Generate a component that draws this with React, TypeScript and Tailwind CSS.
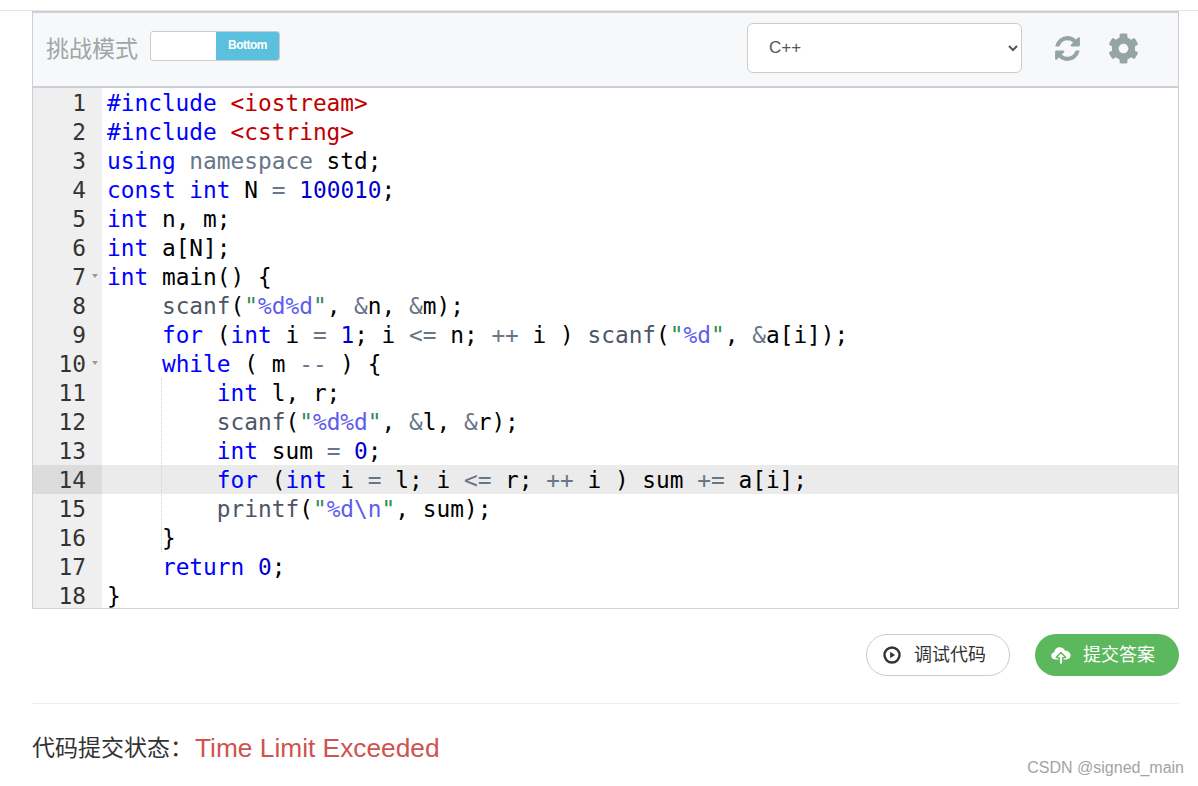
import { FaCog } from 'react-icons/fa';

type Token = [string, string?];

const kw = 'text-[#0000ff]';
const inc = 'text-[#c00000]';
const op = 'text-[#687687]';
const fn = 'text-[#4d5666]';
const num = 'text-[#0000cd]';
const q = 'text-[#2e8b57]';
const fmt = 'text-[#5c5cf0]';

const lines: { tokens: Token[]; fold?: boolean }[] = [
  { tokens: [['#include', kw], [' '], ['<iostream>', inc]] },
  { tokens: [['#include', kw], [' '], ['<cstring>', inc]] },
  { tokens: [['using', kw], [' '], ['namespace', op], [' std;']] },
  { tokens: [['const', kw], [' '], ['int', kw], [' N '], ['=', op], [' '], ['100010', num], [';']] },
  { tokens: [['int', kw], [' n, m;']] },
  { tokens: [['int', kw], [' a[N];']] },
  { tokens: [['int', kw], [' main() {']], fold: true },
  { tokens: [['    '], ['scanf', fn], ['('], ['"', q], ['%d%d', fmt], ['"', q], [', '], ['&', op], ['n, '], ['&', op], ['m);']] },
  {
    tokens: [
      ['    '], ['for', kw], [' ('], ['int', kw], [' i '], ['=', op], [' '], ['1', num], ['; i '], ['<=', op], [' n; '], ['++', op],
      [' i ) '], ['scanf', fn], ['('], ['"', q], ['%d', fmt], ['"', q], [', '], ['&', op], ['a[i]);'],
    ],
  },
  { tokens: [['    '], ['while', kw], [' ( m '], ['--', op], [' ) {']], fold: true },
  { tokens: [['        '], ['int', kw], [' l, r;']] },
  { tokens: [['        '], ['scanf', fn], ['('], ['"', q], ['%d%d', fmt], ['"', q], [', '], ['&', op], ['l, '], ['&', op], ['r);']] },
  { tokens: [['        '], ['int', kw], [' sum '], ['=', op], [' '], ['0', num], [';']] },
  {
    tokens: [
      ['        '], ['for', kw], [' ('], ['int', kw], [' i '], ['=', op], [' l; i '], ['<=', op], [' r; '], ['++', op],
      [' i ) sum '], ['+=', op], [' a[i];'],
    ],
  },
  { tokens: [['        '], ['printf', fn], ['('], ['"', q], ['%d\\n', fmt], ['"', q], [', sum);']] },
  { tokens: [['    }']] },
  { tokens: [['    '], ['return', kw], [' '], ['0', num], [';']] },
  { tokens: [['}']] },
];

const App = () => {
  return (
    <div className="relative h-[786px] w-[1198px] overflow-hidden bg-white font-['Liberation_Sans','Noto_Sans_CJK_SC',sans-serif]">
      <div className="h-[11px] border-b border-[#e4e5e7]"></div>

      <div className="pl-8 pr-[19px]">
        {/* Editor */}
        <div className="border border-t-2 border-[#ccd0d6] border-b-[#d2d2d2]">
          <div className="flex h-[75px] items-center border-b-2 border-[#ccd0d6] bg-[#f7f8fa] pl-[13px]">
            <span className="text-[23px] leading-none text-[#a0a5a5]">挑战模式</span>
            <div className="ml-[12px] mt-[-8px] flex h-[30px] w-[130px] overflow-hidden rounded-[3px] border border-[#cccccc] bg-white">
              <div className="w-[65px]"></div>
              <div className="flex flex-1 items-center justify-center bg-[#5bc0de] pb-[2px] text-xs font-bold tracking-[-0.5px] text-white">
                Bottom
              </div>
            </div>
            <select className="ml-[467px] mt-[-4px] h-[50px] w-[275px] rounded-md border border-[#cccccc] bg-white pl-[17px] text-[17px] text-[#555555]">
              <option>C++</option>
            </select>
            <svg viewBox="0 0 1792 1792" className="ml-[31px] mt-[-2px] h-[29px] w-[29px] fill-[#95a5a6]">
              <path d="M1639 1056q0 5-1 7-64 268-268 434.5t-478 166.5q-146 0-282.5-55t-243.5-157l-129 129q-19 19-45 19t-45-19-19-45v-448q0-26 19-45t45-19h448q26 0 45 19t19 45-19 45l-137 137q71 66 161 102t187 36q134 0 250-65t186-179q11-17 53-117 8-23 30-23h192q13 0 22.5 9.5t9.5 22.5zm25-800v448q0 26-19 45t-45 19h-448q-26 0-45-19t-19-45 19-45l138-138q-148-137-349-137-134 0-250 65t-186 179q-11 17-53 117-8 23-30 23h-199q-13 0-22.5-9.5t-9.5-22.5v-7q65-268 270-434.5t480-166.5q146 0 284 55.5t245 156.5l130-129q19-19 45-19t45 19 19 45z" />
            </svg>
            <FaCog className="ml-[26px] mt-[-3px] h-[31px] w-[31px] text-[#95a5a6]" />
          </div>

          <div className="relative h-[520px] overflow-hidden font-['DejaVu_Sans_Mono',monospace] text-[22.8px] leading-[29px] text-black">
            {lines.map((line, i) => (
              <div key={i} className={i === 13 ? 'flex h-[29px] bg-[#ebebeb]' : 'flex h-[29px]'}>
                <div
                  className={`relative h-[29px] w-[69px] shrink-0 pr-[16px] pt-px text-right text-[#333333] ${
                    i === 13 ? 'bg-[#dcdcdc]' : 'bg-[#efefef]'
                  }`}
                >
                  {i + 1}
                  {line.fold && (
                    <span className="absolute right-[4px] top-[12px] h-0 w-0 border-x-[3px] border-t-[4px] border-x-transparent border-t-[#999999]"></span>
                  )}
                </div>
                <pre className="pl-[5px] pt-px font-['DejaVu_Sans_Mono',monospace]">
                  {line.tokens.map(([text, cls], j) => (
                    <span key={j} className={cls}>
                      {text}
                    </span>
                  ))}
                </pre>
              </div>
            ))}
            {/* indent guide */}
            <div className="absolute left-[128px] top-[290px] h-[174px] border-l border-dotted border-[#cfcfcf]"></div>
          </div>
        </div>

        {/* Actions */}
        <div className="mt-[25px] flex justify-end gap-[25px]">
          <button className="flex h-[42px] w-[144px] items-center rounded-full border border-[#cccccc] bg-white pl-4 text-[18px] text-[#333333]">
            <svg viewBox="0 0 18 18" className="h-[18px] w-[18px]">
              <circle cx="9" cy="9" r="7.5" fill="none" stroke="#333333" strokeWidth="2.4" />
              <path d="M7.2 5.8 12 9l-4.8 3.2z" fill="#333333" />
            </svg>
            <span className="ml-[13px]">调试代码</span>
          </button>
          <button className="flex h-[42px] w-[144px] items-center rounded-full bg-[#5cb85c] pl-4 text-[18px] text-white">
            <svg viewBox="0 0 20 20" className="h-[20px] w-[20px]">
              <path
                d="M4.5 14.5C2 14.5.3 12.9.3 10.8c0-1.8 1.2-3.2 2.9-3.6C3.6 4.4 5.9 2.3 8.8 2.3c2.4 0 4.4 1.4 5.3 3.5 2.9-.2 5.5 2 5.5 4.8 0 2.2-1.8 3.9-4.2 3.9z"
                fill="#ffffff"
              />
              <path d="M10 7.5 5.2 12.6h3v6.6h3.6v-6.6h3z" fill="#ffffff" stroke="#5cb85c" strokeWidth="1.4" strokeLinejoin="round" />
            </svg>
            <span className="ml-[12px]">提交答案</span>
          </button>
        </div>

        <div className="mt-[27px] border-t border-[#eeeeee]"></div>

        <div className="mt-[27px] flex items-center leading-[34px]">
          <span className="text-[23px] text-[#333333]">代码提交状态：</span>
          <span className="ml-[2px] text-[26.3px] text-[#cf5350]">Time Limit Exceeded</span>
        </div>
      </div>

      <div className="absolute bottom-[8px] right-[14px] font-['Liberation_Sans',sans-serif] text-[16px] leading-5 text-[#a3a3a3]">
        CSDN @signed_main
      </div>
    </div>
  );
};

export default App;
